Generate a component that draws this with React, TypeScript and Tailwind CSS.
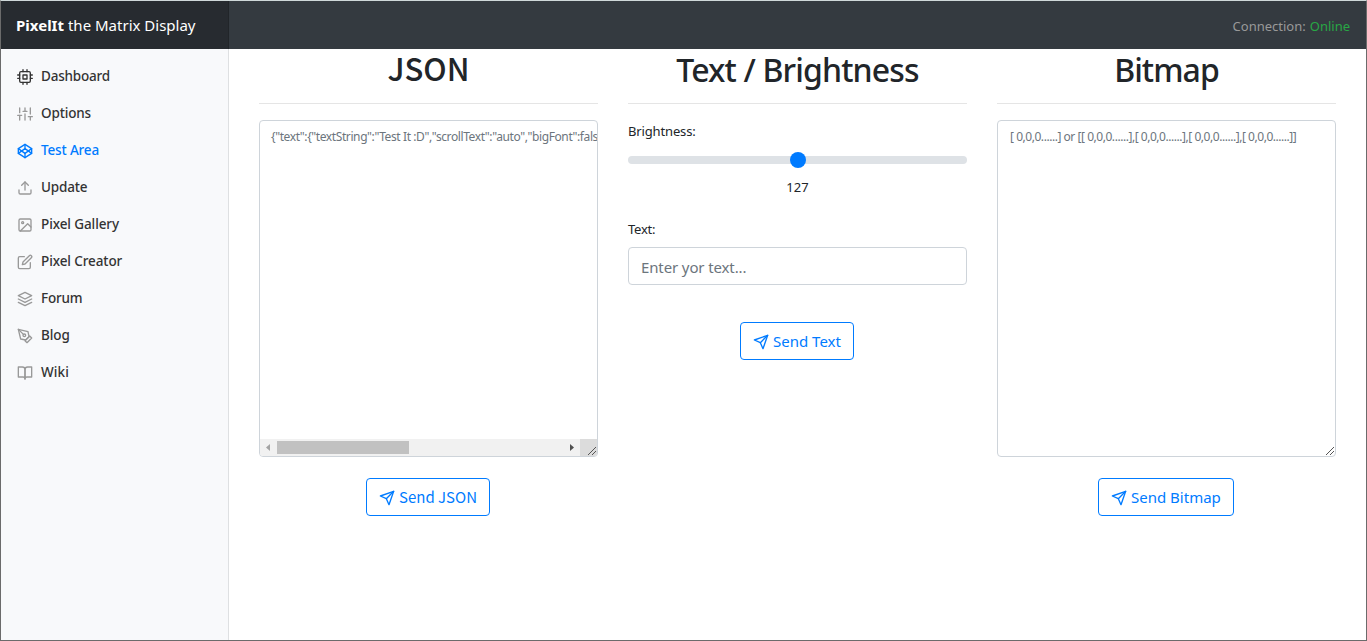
import type { ReactNode } from "react";
import {
  FiBookOpen,
  FiCodepen,
  FiCpu,
  FiEdit,
  FiImage,
  FiLayers,
  FiPenTool,
  FiSend,
  FiSliders,
  FiUpload,
} from "react-icons/fi";

const navItems = [
  { label: "Dashboard", icon: FiCpu, iconClass: "text-[#333333]", textClass: "text-[#333333] tracking-[-0.2px]" },
  { label: "Options", icon: FiSliders, iconClass: "text-[#999999]", textClass: "text-[#333333] tracking-[-0.15px]" },
  { label: "Test Area", icon: FiCodepen, iconClass: "text-[#007bff]", textClass: "text-[#007bff] tracking-[-0.15px]" },
  { label: "Update", icon: FiUpload, iconClass: "text-[#999999]", textClass: "text-[#333333] tracking-[-0.15px]" },
  { label: "Pixel Gallery", icon: FiImage, iconClass: "text-[#999999]", textClass: "text-[#333333] tracking-[-0.1px]" },
  { label: "Pixel Creator", icon: FiEdit, iconClass: "text-[#999999]", textClass: "text-[#333333] tracking-[-0.1px]" },
  { label: "Forum", icon: FiLayers, iconClass: "text-[#999999]", textClass: "text-[#333333] tracking-[-0.2px]" },
  { label: "Blog", icon: FiPenTool, iconClass: "text-[#999999]", textClass: "text-[#333333] tracking-[-0.1px]" },
  { label: "Wiki", icon: FiBookOpen, iconClass: "text-[#999999]", textClass: "text-[#333333] tracking-[0.1px]" },
];

function Heading({ children, className }: { children: ReactNode; className: string }) {
  return (
    <h2 className={`h-[55px] border-b border-[#e5e5e5] text-center leading-[38px] font-medium whitespace-nowrap text-[#212529] ${className}`}>
      {children}
    </h2>
  );
}

function SendButton({ children, className }: { children: ReactNode; className: string }) {
  return (
    <button className={`mr-px flex h-[38px] items-center self-center rounded border border-[#007bff] pl-3 text-[15px] leading-6 text-[#007bff] ${className}`}>
      <FiSend className="mt-[2px] mr-1 size-4 shrink-0" />
      <span className="whitespace-nowrap">{children}</span>
    </button>
  );
}

function ResizeGrip() {
  return (
    <svg className="size-[17px]" viewBox="0 0 17 17" fill="none" stroke="#555" strokeWidth="1">
      <path d="M8 16 L16 8 M12 16 L16 12" />
    </svg>
  );
}

export default function App() {
  return (
    <div className="flex h-[641px] w-[1367px] flex-col overflow-hidden border border-t-[#cfd8d9] border-r-[#6b6b6b] border-b-[#6b6b6b] border-l-[#6b6b6b] bg-white font-['Noto_Sans',sans-serif] text-[#212529]">
      <header className="flex h-12 shrink-0 bg-[#343a40] text-white">
        <div className="flex w-[228px] items-center border-r border-[#212529] bg-[#272b30] pl-[15px] text-[15px]">
          <span className="font-bold">PixelIt</span>
          <span className="ml-[4px]">the Matrix Display</span>
        </div>
        <div className="flex flex-1 items-center justify-end pt-[3px] pr-4 text-[13px] text-[#999999]">
          <span>Connection:</span>
          <span className="ml-1 text-[#28a745]">Online</span>
        </div>
      </header>
      <div className="flex flex-1">
        <nav className="w-[228px] border-r border-[#dee0e2] bg-[#f8f9fb] pt-[9px]">
          {navItems.map(({ label, icon: Icon, iconClass, textClass }) => (
            <a key={label} className={`flex h-[37px] items-center pl-4 text-[13.5px] font-medium ${textClass}`}>
              <Icon className={`mr-2 size-4 ${iconClass}`} />
              <span>{label}</span>
            </a>
          ))}
        </nav>
        <main className="grid flex-1 grid-cols-[339px_339px_339px] gap-[30px] pl-[30px]">
          <section className="flex flex-col">
            <Heading className="font-['Noto_Sans_CJK_SC','Noto_Sans',sans-serif] text-[31px]">JSON</Heading>
            <div className="mt-4 flex h-[337px] flex-col justify-between overflow-hidden rounded border border-[#ced4da]">
              <p className="pt-[7px] pl-[11px] text-[12px] leading-[18px] tracking-[-0.4px] whitespace-nowrap text-[#6c757d]">
                {'{"text":{"textString":"Test It :D","scrollText":"auto","bigFont":fals'}
              </p>
              <div className="flex h-[17px] bg-[#f1f1f1]">
                <svg className="h-[17px] w-[320px]" viewBox="0 0 320 17">
                  <path d="M10 5 V12 L6 8.5 Z" fill="#a3a3a3" />
                  <rect x="17" y="2" width="132" height="13" fill="#c1c1c1" />
                  <path d="M310 5 V12 L314 8.5 Z" fill="#505050" />
                </svg>
                <div className="size-[17px] bg-[#dcdcdc]"><ResizeGrip /></div>
              </div>
            </div>
            <SendButton className="mt-[21px] w-[124px] font-['Noto_Sans_CJK_SC','Noto_Sans',sans-serif]">Send JSON</SendButton>
          </section>
          <section className="flex flex-col">
            <Heading className="pt-[2px] text-[32px] tracking-[-0.85px]">Text / Brightness</Heading>
            <label className="mt-[17px] h-[21px] text-[13px] leading-[21px] tracking-[-0.15px]">Brightness:</label>
            <div className="mt-[10px] flex h-4 items-center">
              <div className="flex h-2 w-full items-center justify-center rounded-full bg-[#dee2e6]">
                <span className="ml-px size-4 rounded-full bg-[#007bff]" />
              </div>
            </div>
            <div className="mt-[9px] h-[21px] text-center text-[13px] leading-[21px]">127</div>
            <label className="mt-[21px] h-[21px] text-[13px] leading-[21px] tracking-[-0.25px]">Text:</label>
            <div className="mt-[7px] flex h-[38px] items-center rounded border border-[#ced4da] pt-[3px] pl-3 text-[15px] tracking-[-0.12px] text-[#6c757d]">Enter yor text...</div>
            <SendButton className="mt-[37px] w-[114px]">Send Text</SendButton>
          </section>
          <section className="flex flex-col">
            <Heading className="pt-[2px] text-[32px] tracking-[-0.95px]">Bitmap</Heading>
            <div className="mt-4 flex h-[337px] flex-col justify-between overflow-hidden rounded border border-[#ced4da]">
              <p className="pt-[7px] pl-3 text-[12px] leading-[18px] tracking-[-0.46px] whitespace-nowrap text-[#6c757d]">
                [ 0,0,0......] or [[ 0,0,0......],[ 0,0,0......],[ 0,0,0......],[ 0,0,0......]]
              </p>
              <div className="self-end"><ResizeGrip /></div>
            </div>
            <SendButton className="mt-[21px] w-[136px]">Send Bitmap</SendButton>
          </section>
        </main>
      </div>
    </div>
  );
}
